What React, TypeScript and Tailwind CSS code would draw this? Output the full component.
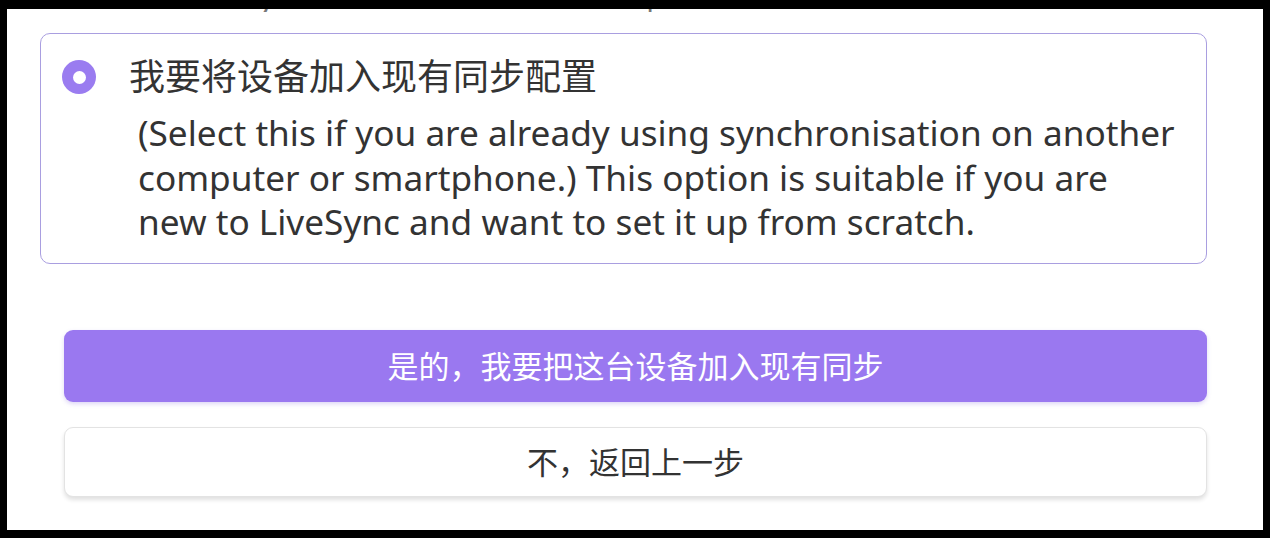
import React from "react";

const sans = "font-['Noto_Sans','Noto_Sans_CJK_SC',sans-serif]";

function Radio() {
  return (
    <span className="flex h-[34px] w-[34px] shrink-0 items-center justify-center rounded-full bg-[#9a7cf0]">
      <span className="h-[13px] w-[13px] rounded-full bg-white" />
    </span>
  );
}

export default function App() {
  return (
    <div className={`flex h-[538px] w-[1270px] bg-black pl-[7px] pt-[9px] ${sans}`}>
      <div className="flex h-[521px] w-[1256px] flex-col overflow-hidden bg-white">
        {/* tail of the line above, scrolled out of view */}
        <div className="flex h-[3px] overflow-hidden text-[30px] leading-[30px] text-[#777]">
          <span className="ml-[252px] -mt-[27px]">y</span>
          <span className="ml-[372px] -mt-[27px]">p</span>
        </div>

        <div className="ml-[33px] mt-[21px] flex h-[231px] w-[1167px] flex-col rounded-[10px] border border-[#a99ee0] bg-white pl-[21px] pt-[21px]">
          <div className="flex h-[44px] items-center gap-[33px]">
            <Radio />
            <span className="text-[36px] leading-[44px] text-[#333]">我要将设备加入现有同步配置</span>
          </div>
          <p className="ml-[76px] mt-[11px] whitespace-nowrap text-[35.2px] leading-[44.5px] text-[#333]">
            (Select this if you are already using synchronisation on another
            <br />
            computer or smartphone.) This option is suitable if you are
            <br />
            new to LiveSync and want to set it up from scratch.
          </p>
        </div>

        <div className="ml-[57px] mt-[66px] flex w-[1143px] flex-col gap-[25px]">
          <button className="flex h-[72px] items-center justify-center rounded-[9px] bg-[#9a78f0] text-[31px] text-white shadow-[0_2px_4px_rgba(120,90,220,0.25)]">
            是的，我要把这台设备加入现有同步
          </button>
          <button className="flex h-[70px] items-center justify-center rounded-[9px] border border-[#e3e3e3] bg-white text-[31px] text-[#333] shadow-[0_3px_4px_rgba(0,0,0,0.12)]">
            不，返回上一步
          </button>
        </div>
      </div>
    </div>
  );
}
